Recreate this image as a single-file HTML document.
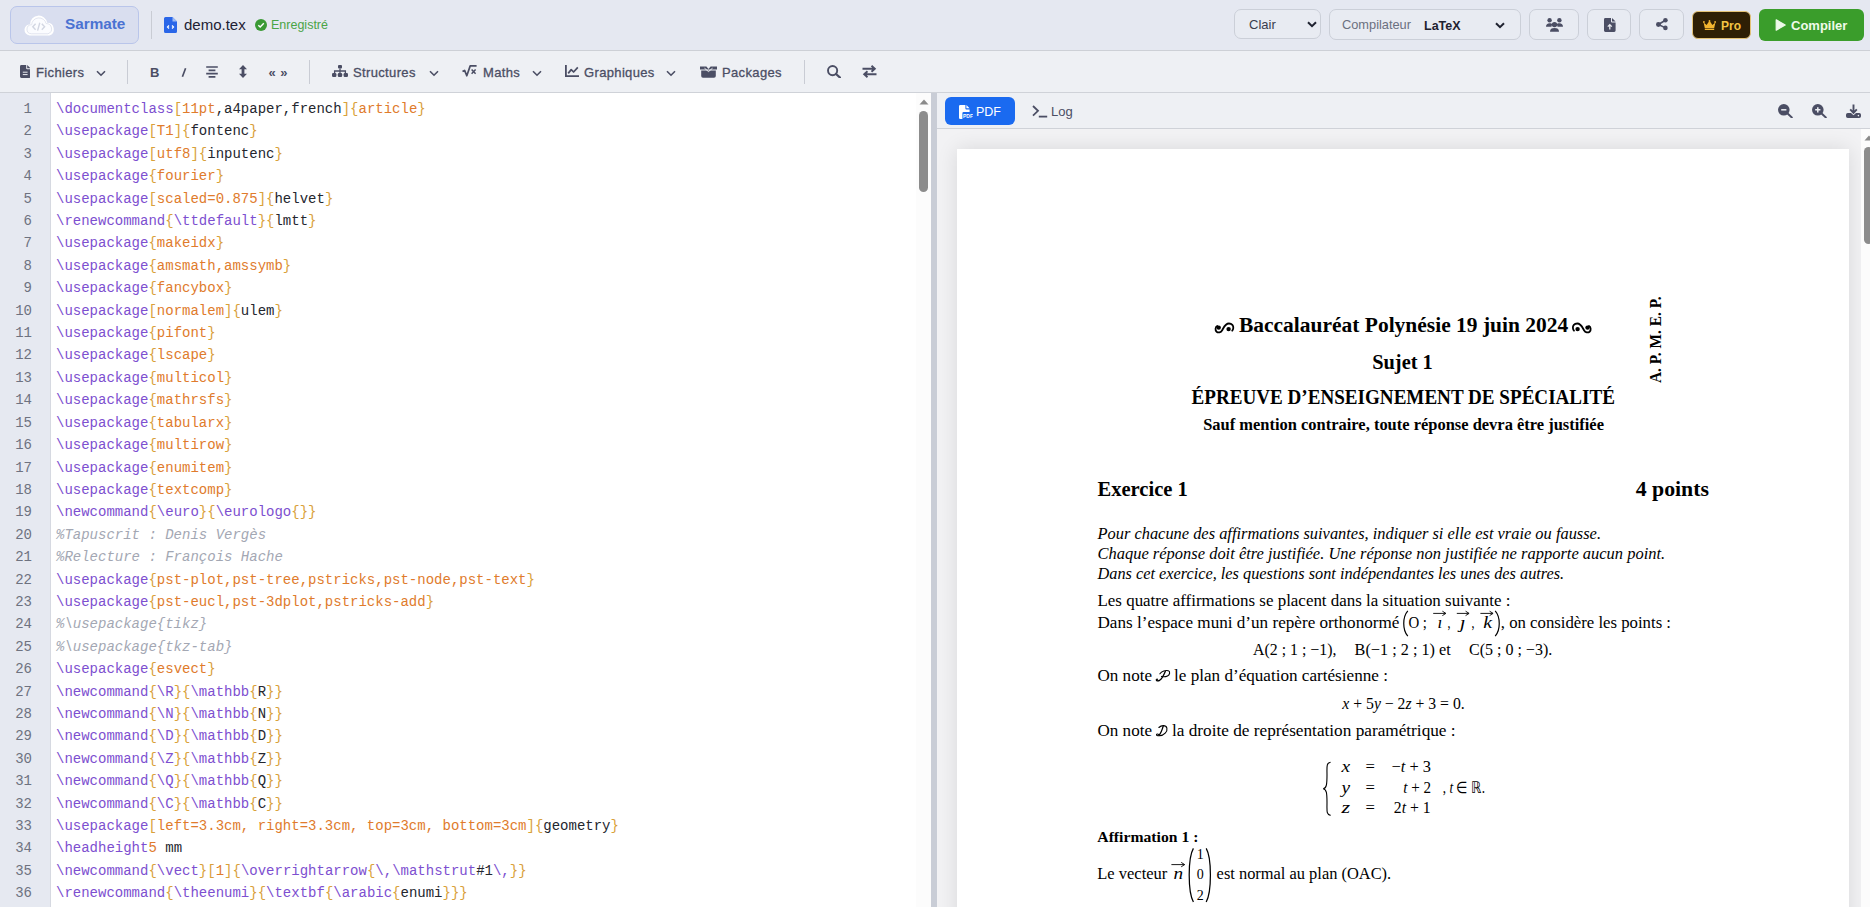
<!DOCTYPE html>
<html><head><meta charset="utf-8">
<style>
*{box-sizing:border-box;margin:0;padding:0}
html,body{width:1870px;height:907px;overflow:hidden;background:#fff;font-family:"Liberation Sans",sans-serif}
.a{position:absolute}
#hdr{left:0;top:0;width:1870px;height:51px;background:#e5e8f1;border-bottom:1px solid #cdd0d6}
#tb{left:0;top:51px;width:1870px;height:42px;background:#eef0f4;border-bottom:1px solid #cfd2d8}
.sep{width:1px;background:#c9ccd4}
.tbt{font-size:13px;color:#4b4e64;top:64px;line-height:18px;letter-spacing:0.35px;-webkit-text-stroke:0.3px #4b4e64}
.hbtn{top:9px;height:30px;border:1px solid #cbcfd8;border-radius:7px;background:#e8ebf2}
svg{display:block}
#gut{left:0;top:98px;width:32px;text-align:right;font-family:"Liberation Mono",monospace;font-size:14px;line-height:22.4px;color:#6e7280}
#code{left:56px;top:98px;font-family:"Liberation Mono",monospace;font-size:14px;line-height:22.4px;color:#24262e;white-space:pre}
#code b{font-weight:normal;color:#7d4fd0}
#code u{text-decoration:none;color:#d9a13a}
#code s{text-decoration:none;color:#e07b2c}
#code i{color:#a3a7b3}
</style></head><body>
<div id="hdr" class="a"></div>
<div id="tb" class="a"></div>

<!-- logo -->
<div class="a" style="left:10px;top:6px;width:129px;height:38px;border:1px solid #b9c5ea;border-radius:7px;background:#d9deef"></div>
<svg class="a" style="left:24px;top:14px" width="32" height="22" viewBox="0 0 32 22">
 <path d="M5.60 21.50 A5.70 5.70 0 0 1 6.14 10.13 A8.60 8.60 0 0 1 23.20 8.68 A6.60 6.60 0 0 1 25.40 21.50 Z" fill="#fff"/>
 <path d="M5.60 21.50 A5.70 5.70 0 0 1 6.14 10.13 A8.60 8.60 0 0 1 23.20 8.68 A6.60 6.60 0 0 1 25.40 21.50 Z" transform="translate(16 13) scale(0.84 0.8) translate(-16 -13)" fill="#fbfcff" stroke="#dcdfeb" stroke-width="1"/>
 <path d="M11.6 9.8 L8.8 12.8 L11.6 15.8 M17.8 9.8 L20.6 12.8 L17.8 15.8 M15.8 8.8 L13.6 16.6" fill="none" stroke="#d2d6e2" stroke-width="1.4"/>
</svg>
<div class="a" style="left:65px;top:15px;font-size:15.3px;font-weight:bold;color:#4a72d2;line-height:18px">Sarmate</div>
<div class="a sep" style="left:151px;top:11px;height:28px"></div>
<svg class="a" style="left:164px;top:17px" width="13" height="16" viewBox="0 0 13 16">
 <path d="M1.5 0 H8.5 L13 4.5 V14.5 A1.5 1.5 0 0 1 11.5 16 H1.5 A1.5 1.5 0 0 1 0 14.5 V1.5 A1.5 1.5 0 0 1 1.5 0 Z" fill="#2a66e8"/>
 <path d="M8.5 0 V4.5 H13" fill="#9fbcf5"/>
 <path d="M5 8.5 L3.5 10 L5 11.5 M8 8.5 L9.5 10 L8 11.5" fill="none" stroke="#fff" stroke-width="1.2"/>
</svg>
<div class="a" style="left:184px;top:16px;font-size:15px;color:#1e2133;line-height:18px">demo.tex</div>
<svg class="a" style="left:255px;top:19px" width="12" height="12" viewBox="0 0 12 12">
 <circle cx="6" cy="6" r="6" fill="#3a9a35"/>
 <path d="M3.3 6.2 L5.2 8 L8.8 4.3" fill="none" stroke="#fff" stroke-width="1.4"/>
</svg>
<div class="a" style="left:271px;top:17px;font-size:12.5px;color:#4aa445;line-height:16px">Enregistré</div>

<!-- header right -->
<div class="a hbtn" style="left:1234px;width:87px"></div>
<div class="a" style="left:1249px;top:17px;font-size:13px;color:#3a3d4e;line-height:16px">Clair</div>
<svg class="a" style="left:1307px;top:21px" width="10" height="7" viewBox="0 0 10 7"><path d="M1 1.2 L5 5.2 L9 1.2" fill="none" stroke="#1f2230" stroke-width="2"/></svg>
<div class="a hbtn" style="left:1329px;width:192px;height:31px"></div>
<div class="a" style="left:1342px;top:17px;font-size:12.8px;color:#6b7080;line-height:16px">Compilateur</div>
<div class="a" style="left:1424px;top:18px;font-size:12.5px;font-weight:bold;color:#1f2230;line-height:16px">LaTeX</div>
<svg class="a" style="left:1495px;top:22px" width="10" height="7" viewBox="0 0 10 7"><path d="M1 1.2 L5 5.2 L9 1.2" fill="none" stroke="#1f2230" stroke-width="2"/></svg>
<div class="a hbtn" style="left:1529px;width:50px;height:31px"></div>
<div class="a hbtn" style="left:1587px;width:44px;height:31px"></div>
<div class="a hbtn" style="left:1639px;width:45px;height:31px"></div>
<div class="a" style="left:1692px;top:11px;width:59px;height:28px;background:#2e1f05;border:1px solid #e3c277;border-radius:6px"></div>
<div class="a" style="left:1721px;top:17.5px;font-size:12px;font-weight:bold;color:#f3c443;line-height:16px">Pro</div>
<div class="a" style="left:1759px;top:9px;width:105px;height:32px;background:#3a9d2b;border-radius:6px"></div>
<div class="a" style="left:1791px;top:18px;font-size:13px;font-weight:bold;color:#effbe9;line-height:16px">Compiler</div>

<!-- toolbar -->
<div class="a tbt" style="left:36px">Fichiers</div>
<div class="a sep" style="left:127px;top:60px;height:24px"></div>
<div class="a sep" style="left:309px;top:60px;height:24px"></div>
<div class="a tbt" style="left:353px">Structures</div>
<div class="a tbt" style="left:483px">Maths</div>
<div class="a tbt" style="left:584px">Graphiques</div>
<div class="a tbt" style="left:722px">Packages</div>
<div class="a sep" style="left:804px;top:60px;height:24px"></div>

<!-- EDITOR -->
<div class="a" style="left:0;top:93px;width:51px;height:814px;background:#e6e9f1;border-right:1px solid #d6d9e1"></div>
<div class="a" style="left:931px;top:93px;width:6px;height:814px;background:#c9cdd6"></div>
<!-- CODE -->
<div class="a" id="gut"><div>1</div><div>2</div><div>3</div><div>4</div><div>5</div><div>6</div><div>7</div><div>8</div><div>9</div><div>10</div><div>11</div><div>12</div><div>13</div><div>14</div><div>15</div><div>16</div><div>17</div><div>18</div><div>19</div><div>20</div><div>21</div><div>22</div><div>23</div><div>24</div><div>25</div><div>26</div><div>27</div><div>28</div><div>29</div><div>30</div><div>31</div><div>32</div><div>33</div><div>34</div><div>35</div><div>36</div></div>
<div class="a" id="code"><div><b>\documentclass</b><u>[</u><s>11pt</s>,a4paper,french<u>]</u><u>{</u><s>article</s><u>}</u></div><div><b>\usepackage</b><u>[</u><s>T1</s><u>]</u><u>{</u>fontenc<u>}</u></div><div><b>\usepackage</b><u>[</u><s>utf8</s><u>]</u><u>{</u>inputenc<u>}</u></div><div><b>\usepackage</b><u>{</u><s>fourier</s><u>}</u></div><div><b>\usepackage</b><u>[</u><s>scaled=0.875</s><u>]</u><u>{</u>helvet<u>}</u></div><div><b>\renewcommand</b><u>{</u><b>\ttdefault</b><u>}</u><u>{</u>lmtt<u>}</u></div><div><b>\usepackage</b><u>{</u><s>makeidx</s><u>}</u></div><div><b>\usepackage</b><u>{</u><s>amsmath,amssymb</s><u>}</u></div><div><b>\usepackage</b><u>{</u><s>fancybox</s><u>}</u></div><div><b>\usepackage</b><u>[</u><s>normalem</s><u>]</u><u>{</u>ulem<u>}</u></div><div><b>\usepackage</b><u>{</u><s>pifont</s><u>}</u></div><div><b>\usepackage</b><u>{</u><s>lscape</s><u>}</u></div><div><b>\usepackage</b><u>{</u><s>multicol</s><u>}</u></div><div><b>\usepackage</b><u>{</u><s>mathrsfs</s><u>}</u></div><div><b>\usepackage</b><u>{</u><s>tabularx</s><u>}</u></div><div><b>\usepackage</b><u>{</u><s>multirow</s><u>}</u></div><div><b>\usepackage</b><u>{</u><s>enumitem</s><u>}</u></div><div><b>\usepackage</b><u>{</u><s>textcomp</s><u>}</u></div><div><b>\newcommand</b><u>{</u><b>\euro</b><u>}</u><u>{</u><b>\eurologo</b><u>{</u><u>}</u><u>}</u></div><div><i>%Tapuscrit : Denis Vergès</i></div><div><i>%Relecture : François Hache</i></div><div><b>\usepackage</b><u>{</u><s>pst-plot,pst-tree,pstricks,pst-node,pst-text</s><u>}</u></div><div><b>\usepackage</b><u>{</u><s>pst-eucl,pst-3dplot,pstricks-add</s><u>}</u></div><div><i>%\usepackage{tikz}</i></div><div><i>%\usepackage{tkz-tab}</i></div><div><b>\usepackage</b><u>{</u><s>esvect</s><u>}</u></div><div><b>\newcommand</b><u>{</u><b>\R</b><u>}</u><u>{</u><b>\mathbb</b><u>{</u>R<u>}</u><u>}</u></div><div><b>\newcommand</b><u>{</u><b>\N</b><u>}</u><u>{</u><b>\mathbb</b><u>{</u>N<u>}</u><u>}</u></div><div><b>\newcommand</b><u>{</u><b>\D</b><u>}</u><u>{</u><b>\mathbb</b><u>{</u>D<u>}</u><u>}</u></div><div><b>\newcommand</b><u>{</u><b>\Z</b><u>}</u><u>{</u><b>\mathbb</b><u>{</u>Z<u>}</u><u>}</u></div><div><b>\newcommand</b><u>{</u><b>\Q</b><u>}</u><u>{</u><b>\mathbb</b><u>{</u>Q<u>}</u><u>}</u></div><div><b>\newcommand</b><u>{</u><b>\C</b><u>}</u><u>{</u><b>\mathbb</b><u>{</u>C<u>}</u><u>}</u></div><div><b>\usepackage</b><u>[</u><s>left=3.3cm, right=3.3cm, top=3cm, bottom=3cm</s><u>]</u><u>{</u>geometry<u>}</u></div><div><b>\headheight</b><s>5</s> mm</div><div><b>\newcommand</b><u>{</u><b>\vect</b><u>}</u><u>[</u><s>1</s><u>]</u><u>{</u><b>\overrightarrow</b><u>{</u><b>\,</b><b>\mathstrut</b>#1<b>\,</b><u>}</u><u>}</u></div><div><b>\renewcommand</b><u>{</u><b>\theenumi</b><u>}</u><u>{</u><b>\textbf</b><u>{</u><b>\arabic</b><u>{</u>enumi<u>}</u><u>}</u><u>}</u></div></div>
<!-- /CODE -->

<!-- PDF panel -->
<div class="a" style="left:937px;top:93px;width:933px;height:36px;background:#eef0f4;border-bottom:1px solid #cfd2d8"></div>
<div class="a" style="left:937px;top:129px;width:933px;height:778px;background:#f2f2f4"></div>
<div class="a" style="left:957px;top:149px;width:892px;height:800px;background:#fff;box-shadow:0 0 20px rgba(0,0,0,.11)"></div>
<!-- PDF -->
<svg class="a" style="left:957px;top:149px" width="892" height="758" viewBox="957 149 892 758" font-family="Liberation Serif" fill="#000"><g transform="translate(1214.6 322.6)"><path d="M2.6 3.4 C0.6 4.4 0.4 7.8 2 9.1 C3.6 10.4 6.2 10 7.6 7.6 C9 5.2 10.6 0.9 14.4 0.9 C17.4 0.9 18.9 3.2 18.7 5.4 C18.5 7 17.8 7.9 17.6 8.1" fill="none" stroke="#000" stroke-width="1.8" stroke-linecap="round"/><circle cx="4.1" cy="5" r="2.2"/><circle cx="14" cy="6.5" r="2.2"/></g>
<g transform="translate(1591.6 322.6) scale(-1 1)"><path d="M2.6 3.4 C0.6 4.4 0.4 7.8 2 9.1 C3.6 10.4 6.2 10 7.6 7.6 C9 5.2 10.6 0.9 14.4 0.9 C17.4 0.9 18.9 3.2 18.7 5.4 C18.5 7 17.8 7.9 17.6 8.1" fill="none" stroke="#000" stroke-width="1.8" stroke-linecap="round"/><circle cx="4.1" cy="5" r="2.2"/><circle cx="14" cy="6.5" r="2.2"/></g>
<text x="1239.0" y="331.8" font-size="21.6" font-weight="bold" font-style="normal" textLength="329.2" lengthAdjust="spacingAndGlyphs">Baccalauréat Polynésie 19 juin 2024</text>
<text x="1372.2" y="369.4" font-size="20.2" font-weight="bold" font-style="normal" textLength="60.6" lengthAdjust="spacingAndGlyphs">Sujet 1</text>
<text x="1191.6" y="403.5" font-size="20.2" font-weight="bold" font-style="normal" textLength="423.4" lengthAdjust="spacingAndGlyphs">ÉPREUVE D’ENSEIGNEMENT DE SPÉCIALITÉ</text>
<text x="1203.2" y="430.2" font-size="16.9" font-weight="bold" font-style="normal" textLength="400.8" lengthAdjust="spacingAndGlyphs">Sauf mention contraire, toute réponse devra être justifiée</text>
<text transform="translate(1661 383) rotate(-90)" font-size="16.5" font-weight="bold" textLength="86.5" lengthAdjust="spacingAndGlyphs">A. P. M. E. P.</text>
<text x="1097.5" y="495.9" font-size="20.4" font-weight="bold" font-style="normal" textLength="90.3" lengthAdjust="spacingAndGlyphs">Exercice 1</text>
<text x="1635.7" y="495.7" font-size="20.4" font-weight="bold" font-style="normal" textLength="73.3" lengthAdjust="spacingAndGlyphs">4 points</text>
<text x="1097.5" y="539.0" font-size="16.8" font-weight="normal" font-style="italic" textLength="503.5" lengthAdjust="spacingAndGlyphs">Pour chacune des affirmations suivantes, indiquer si elle est vraie ou fausse.</text>
<text x="1097.5" y="559.0" font-size="16.8" font-weight="normal" font-style="italic" textLength="567.7" lengthAdjust="spacingAndGlyphs">Chaque réponse doit être justifiée. Une réponse non justifiée ne rapporte aucun point.</text>
<text x="1097.5" y="578.7" font-size="16.8" font-weight="normal" font-style="italic" textLength="466.7" lengthAdjust="spacingAndGlyphs">Dans cet exercice, les questions sont indépendantes les unes des autres.</text>
<text x="1097.5" y="605.8" font-size="16.2" font-weight="normal" font-style="normal" textLength="412.9" lengthAdjust="spacingAndGlyphs">Les quatre affirmations se placent dans la situation suivante :</text>
<text x="1097.5" y="628.0" font-size="16.2" font-weight="normal" font-style="normal" textLength="301.9" lengthAdjust="spacingAndGlyphs">Dans l’espace muni d’un repère orthonormé</text>
<path d="M1407.8 610.8 C1402.4 617 1402.4 630 1407.8 636.2" fill="none" stroke="#000" stroke-width="1.2"/>
<path d="M1495.2 610.8 C1500.6 617 1500.6 630 1495.2 636.2" fill="none" stroke="#000" stroke-width="1.2"/>
<text x="1408.4" y="628.0" font-size="16.2" font-weight="normal" font-style="normal" textLength="18.6" lengthAdjust="spacingAndGlyphs">O ;</text>
<path d="M1433.2 613.4 H1445.6" stroke="#000" stroke-width="0.9"/><path d="M1442.3999999999999 611.1999999999999 L1445.8999999999999 613.4 L1442.3999999999999 615.6" fill="none" stroke="#000" stroke-width="0.9"/>
<text x="1437.6" y="628.0" font-size="16.2" font-weight="normal" font-style="italic" textLength="4.8" lengthAdjust="spacingAndGlyphs">ı</text>
<text x="1447.4" y="628.0" font-size="16.2" font-weight="normal" font-style="normal" textLength="3.0" lengthAdjust="spacingAndGlyphs">,</text>
<path d="M1456.8 613.4 H1468.8" stroke="#000" stroke-width="0.9"/><path d="M1465.6 611.1999999999999 L1469.1 613.4 L1465.6 615.6" fill="none" stroke="#000" stroke-width="0.9"/>
<text x="1459.8" y="628.0" font-size="16.2" font-weight="normal" font-style="italic" textLength="5.8" lengthAdjust="spacingAndGlyphs">ȷ</text>
<text x="1471.6" y="628.0" font-size="16.2" font-weight="normal" font-style="normal" textLength="3.0" lengthAdjust="spacingAndGlyphs">,</text>
<path d="M1480.4 613.4 H1492.8" stroke="#000" stroke-width="0.9"/><path d="M1489.6 611.1999999999999 L1493.1 613.4 L1489.6 615.6" fill="none" stroke="#000" stroke-width="0.9"/>
<text x="1483.2" y="628.0" font-size="16.2" font-weight="normal" font-style="italic" textLength="8.8" lengthAdjust="spacingAndGlyphs">k</text>
<text x="1500.8" y="628.0" font-size="16.2" font-weight="normal" font-style="normal" textLength="170.2" lengthAdjust="spacingAndGlyphs">, on considère les points :</text>
<text x="1253.0" y="655.0" font-size="16.2" font-weight="normal" font-style="normal" textLength="83.4" lengthAdjust="spacingAndGlyphs">A(2 ; 1 ; −1),</text>
<text x="1354.6" y="655.0" font-size="16.2" font-weight="normal" font-style="normal" textLength="96.2" lengthAdjust="spacingAndGlyphs">B(−1 ; 2 ; 1) et</text>
<text x="1469.0" y="655.0" font-size="16.2" font-weight="normal" font-style="normal" textLength="83.2" lengthAdjust="spacingAndGlyphs">C(5 ; 0 ; −3).</text>
<text x="1097.5" y="680.7" font-size="16.2" font-weight="normal" font-style="normal" textLength="54.5" lengthAdjust="spacingAndGlyphs">On note</text>
<g transform="translate(1155.7 670.2)" fill="none" stroke="#000" stroke-width="1.1" stroke-linecap="round"><path d="M4.2 3.6 C6 0.9 10 -0.1 12.6 0.6 C14.6 1.2 14.4 4.6 11.8 5.8 C9.6 6.8 7 6.6 5.8 6.2"/><path d="M9.6 1.2 C8.2 4.5 6.2 8.4 4.2 9.9 C3 10.7 1.4 10.7 0.7 10 C0.3 9.4 1 8.7 1.8 9.1" stroke-width="1.3"/></g>
<text x="1174.0" y="680.7" font-size="16.2" font-weight="normal" font-style="normal" textLength="213.9" lengthAdjust="spacingAndGlyphs">le plan d’équation cartésienne :</text>
<text x="1342.3" y="708.8" font-size="16.2" textLength="122.4" lengthAdjust="spacingAndGlyphs"><tspan font-style="italic">x</tspan> + 5<tspan font-style="italic">y</tspan> − 2<tspan font-style="italic">z</tspan> + 3 = 0.</text>
<text x="1097.5" y="735.8" font-size="16.2" font-weight="normal" font-style="normal" textLength="54.5" lengthAdjust="spacingAndGlyphs">On note</text>
<g transform="translate(1155.7 724.9)" fill="none" stroke="#000" stroke-width="1.1" stroke-linecap="round"><path d="M3.2 2.6 C5.4 0.4 10.2 -0.3 11.2 3.2 C12 6.5 8.4 10.7 3.6 10.9 C1.8 11 0.6 10.6 0.8 9.7 C1 8.9 2.4 9 3.2 9.7"/><path d="M7.6 1 C6.6 4.5 5.4 8 3.4 10.3" stroke-width="1.3"/></g>
<text x="1172.0" y="735.8" font-size="16.2" font-weight="normal" font-style="normal" textLength="283.6" lengthAdjust="spacingAndGlyphs">la droite de représentation paramétrique :</text>
<path d="M1330.6 762.2 C1326.2 762.6 1327 767 1327 775 C1327 784 1326.6 788.4 1323.2 788.8 C1326.6 789.2 1327 793.6 1327 802.6 C1327 810.6 1326.2 815 1330.6 815.4" fill="none" stroke="#000" stroke-width="1.1"/>
<text x="1341.6" y="771.8" font-size="16.2" font-weight="normal" font-style="italic" textLength="8.6" lengthAdjust="spacingAndGlyphs">x</text>
<text x="1365.6" y="771.8" font-size="16.2" font-weight="normal" font-style="normal" textLength="9.4" lengthAdjust="spacingAndGlyphs">=</text>
<text x="1391.6" y="771.8" font-size="16.2" textLength="39.4" lengthAdjust="spacingAndGlyphs">−<tspan font-style="italic">t</tspan> + 3</text>
<text x="1341.6" y="792.6" font-size="16.2" font-weight="normal" font-style="italic" textLength="8.6" lengthAdjust="spacingAndGlyphs">y</text>
<text x="1365.6" y="792.6" font-size="16.2" font-weight="normal" font-style="normal" textLength="9.4" lengthAdjust="spacingAndGlyphs">=</text>
<text x="1403.2" y="792.6" font-size="16.2" textLength="27.8" lengthAdjust="spacingAndGlyphs"><tspan font-style="italic">t</tspan> + 2</text>
<text x="1442.8" y="792.6" font-size="16.2" textLength="42.2" lengthAdjust="spacingAndGlyphs">, <tspan font-style="italic">t</tspan> ∈ ℝ.</text>
<text x="1341.6" y="812.6" font-size="16.2" font-weight="normal" font-style="italic" textLength="8.6" lengthAdjust="spacingAndGlyphs">z</text>
<text x="1365.6" y="812.6" font-size="16.2" font-weight="normal" font-style="normal" textLength="9.4" lengthAdjust="spacingAndGlyphs">=</text>
<text x="1393.8" y="812.6" font-size="16.2" textLength="36.8" lengthAdjust="spacingAndGlyphs">2<tspan font-style="italic">t</tspan> + 1</text>
<text x="1097.3" y="842.4" font-size="15.6" font-weight="bold" font-style="normal" textLength="101.1" lengthAdjust="spacingAndGlyphs">Affirmation 1 :</text>
<text x="1097.3" y="878.9" font-size="16.2" font-weight="normal" font-style="normal" textLength="70.0" lengthAdjust="spacingAndGlyphs">Le vecteur</text>
<path d="M1171.4 864.6 H1184.4" stroke="#000" stroke-width="0.9"/><path d="M1181.2 862.4 L1184.7 864.6 L1181.2 866.8000000000001" fill="none" stroke="#000" stroke-width="0.9"/>
<text x="1173.4" y="878.9" font-size="16.2" font-weight="normal" font-style="italic" textLength="9.6" lengthAdjust="spacingAndGlyphs">n</text>
<path d="M1193.4 848.4 C1187.8 858 1187.8 892 1193.4 902" fill="none" stroke="#000" stroke-width="1.25"/>
<path d="M1206.2 848.4 C1211.8 858 1211.8 892 1206.2 902" fill="none" stroke="#000" stroke-width="1.25"/>
<text x="1196.8" y="859.0" font-size="13.6" font-weight="normal" font-style="normal" textLength="7.0" lengthAdjust="spacingAndGlyphs">1</text>
<text x="1196.8" y="878.9" font-size="13.6" font-weight="normal" font-style="normal" textLength="7.0" lengthAdjust="spacingAndGlyphs">0</text>
<text x="1196.8" y="899.6" font-size="13.6" font-weight="normal" font-style="normal" textLength="7.0" lengthAdjust="spacingAndGlyphs">2</text>
<text x="1216.6" y="878.9" font-size="16.2" font-weight="normal" font-style="normal" textLength="174.6" lengthAdjust="spacingAndGlyphs">est normal au plan (OAC).</text></svg>
<!-- /PDF -->
<div class="a" style="left:945px;top:97px;width:70px;height:28px;background:#1a6af0;border-radius:6px"></div>
<div class="a" style="left:976px;top:104px;font-size:12.5px;color:#fff;line-height:16px">PDF</div>
<div class="a" style="left:1051px;top:104px;font-size:13px;color:#4b4e64;line-height:16px">Log</div>


<!-- ICONS -->
<!-- toolbar -->
<svg class="a" style="left:19.8px;top:65px" width="10.4" height="13" viewBox="0 0 10.4 13"><path d="M1.4 0 H6.2 V3.2 A1 1 0 0 0 7.2 4.2 H10.4 V11.6 A1.4 1.4 0 0 1 9 13 H1.4 A1.4 1.4 0 0 1 0 11.6 V1.4 A1.4 1.4 0 0 1 1.4 0 Z M7.2 0 L10.4 3.2 H7.2 Z" fill="#4b4e64"/><path d="M2.8 7.2 H7.6 M2.8 9.6 H7.6" stroke="#eef0f4" stroke-width="1"/></svg>
<svg class="a" style="left:95.5px;top:69.5px" width="10" height="7" viewBox="0 0 10 7"><path d="M1 1.2 L5 5.2 L9 1.2" fill="none" stroke="#4b4e64" stroke-width="1.6"/></svg>
<div class="a" style="left:150px;top:65px;font-size:13px;font-weight:bold;color:#4b4e64;line-height:16px">B</div>
<svg class="a" style="left:180.5px;top:68px" width="6" height="9" viewBox="0 0 6 9"><path d="M4.6 0.3 L1.4 8.7" stroke="#4b4e64" stroke-width="1.7"/></svg>
<svg class="a" style="left:205.5px;top:65.5px" width="12" height="12" viewBox="0 0 12 12"><path d="M0.2 1 H11.8 M2.6 4.3 H9.4 M0.2 7.6 H11.8 M2.6 10.9 H9.4" stroke="#4b4e64" stroke-width="1.7"/></svg>
<svg class="a" style="left:238.5px;top:65px" width="8" height="13" viewBox="0 0 8 13"><path d="M4 0 L8 4.2 H5.4 V8.8 H8 L4 13 L0 8.8 H2.6 V4.2 H0 Z" fill="#4b4e64"/></svg>
<div class="a" style="left:268.5px;top:64.5px;font-size:13px;font-weight:bold;color:#4b4e64;line-height:16px;letter-spacing:0.5px">« »</div>
<svg class="a" style="left:331.5px;top:65px" width="16" height="12" viewBox="0 0 16 12"><rect x="6" y="0" width="4" height="3.6" rx="1" fill="#4b4e64"/><path d="M8 3.4 V6 M2.6 8 V6 H13.4 V8 M8 6 V8" fill="none" stroke="#4b4e64" stroke-width="1.3"/><rect x="0" y="8" width="4.4" height="4" rx="1.2" fill="#4b4e64"/><rect x="5.8" y="8" width="4.4" height="4" rx="1.2" fill="#4b4e64"/><rect x="11.6" y="8" width="4.4" height="4" rx="1.2" fill="#4b4e64"/></svg>
<svg class="a" style="left:428.5px;top:69.5px" width="10" height="7" viewBox="0 0 10 7"><path d="M1 1.2 L5 5.2 L9 1.2" fill="none" stroke="#4b4e64" stroke-width="1.6"/></svg>
<svg class="a" style="left:461.5px;top:65px" width="15" height="12" viewBox="0 0 15 12"><path d="M0.5 6.6 L2.6 5.4 L4.8 10.8 L8.2 0.9 H14.6" fill="none" stroke="#4b4e64" stroke-width="1.7" stroke-linejoin="round"/><path d="M9.6 4.6 L13.6 8.8 M13.6 4.6 L9.6 8.8" stroke="#4b4e64" stroke-width="1.5"/></svg>
<svg class="a" style="left:531.5px;top:69.5px" width="10" height="7" viewBox="0 0 10 7"><path d="M1 1.2 L5 5.2 L9 1.2" fill="none" stroke="#4b4e64" stroke-width="1.6"/></svg>
<svg class="a" style="left:564.5px;top:65px" width="14" height="12" viewBox="0 0 14 12"><path d="M0.9 0 V11.1 H14" fill="none" stroke="#4b4e64" stroke-width="1.8"/><path d="M3.2 8.4 L6.2 4.6 L8.6 7 L12.8 2.4" fill="none" stroke="#4b4e64" stroke-width="1.7" stroke-linejoin="round"/></svg>
<svg class="a" style="left:666px;top:69.5px" width="10" height="7" viewBox="0 0 10 7"><path d="M1 1.2 L5 5.2 L9 1.2" fill="none" stroke="#4b4e64" stroke-width="1.6"/></svg>
<svg class="a" style="left:699.5px;top:65.5px" width="17" height="12" viewBox="0 0 17 12"><path d="M0 0.6 H6.4 L8.5 3 L10.6 0.6 H17 V3.6 H0 Z" fill="#4b4e64"/><path d="M1.2 4.6 H15.8 V10 A1.8 1.8 0 0 1 14 11.8 H3 A1.8 1.8 0 0 1 1.2 10 Z" fill="#4b4e64"/><path d="M4.5 2.2 L8.5 5.6 L12.5 2.2" fill="none" stroke="#eef0f4" stroke-width="1"/></svg>
<svg class="a" style="left:826.5px;top:65px" width="14" height="13" viewBox="0 0 14 13"><circle cx="5.6" cy="5.6" r="4.6" fill="none" stroke="#4b4e64" stroke-width="1.9"/><path d="M9 9 L13 12.6" stroke="#4b4e64" stroke-width="2.2" stroke-linecap="round"/></svg>
<svg class="a" style="left:861.5px;top:64.5px" width="15" height="13" viewBox="0 0 15 13"><path d="M0.5 3.8 H12.5 M9.5 0.8 L12.8 3.8 L9.5 6.8 M14.5 9.2 H2.5 M5.5 6.2 L2.2 9.2 L5.5 12.2" fill="none" stroke="#4b4e64" stroke-width="1.9"/></svg>
<!-- header -->
<svg class="a" style="left:1546px;top:17.5px" width="17" height="14" viewBox="0 0 17 14"><circle cx="3.6" cy="2.3" r="2.2" fill="#4b4e64"/><circle cx="13.4" cy="2.3" r="2.2" fill="#4b4e64"/><path d="M0 8.8 C0 6.4 1.4 5.2 3.6 5.2 C5 5.2 6 5.7 6.4 6.6 C5.8 7.2 5.5 8 5.5 8.8 Z M17 8.8 C17 6.4 15.6 5.2 13.4 5.2 C12 5.2 11 5.7 10.6 6.6 C11.2 7.2 11.5 8 11.5 8.8 Z" fill="#4b4e64"/><circle cx="8.5" cy="6.6" r="2.7" fill="#4b4e64"/><path d="M4 13.8 C4 11 5.6 10 8.5 10 C11.4 10 13 11 13 13.8 Z" fill="#4b4e64"/></svg>
<svg class="a" style="left:1603.5px;top:17.5px" width="12" height="14" viewBox="0 0 12 14"><path d="M1.4 0 H7 V3.6 A1 1 0 0 0 8 4.6 H11.6 V12.6 A1.4 1.4 0 0 1 10.2 14 H1.4 A1.4 1.4 0 0 1 0 12.6 V1.4 A1.4 1.4 0 0 1 1.4 0 Z M8 0 L11.6 3.6 H8 Z" fill="#4b4e64"/><path d="M5.8 11.6 V6.8 M3.8 8.6 L5.8 6.6 L7.8 8.6" fill="none" stroke="#e8eaf0" stroke-width="1.3"/></svg>
<svg class="a" style="left:1656px;top:17.5px" width="12" height="13" viewBox="0 0 12 13"><circle cx="9.4" cy="2.3" r="2.3" fill="#4b4e64"/><circle cx="2.4" cy="6.5" r="2.4" fill="#4b4e64"/><circle cx="9.4" cy="9.9" r="2.3" fill="#4b4e64"/><path d="M9.4 2.3 L2.4 6.5 L9.4 9.9" fill="none" stroke="#4b4e64" stroke-width="1.6"/></svg>
<svg class="a" style="left:1703px;top:19.5px" width="13" height="10" viewBox="0 0 13 10"><path d="M0.6 2.4 L3.6 5 L6.5 0.8 L9.4 5 L12.4 2.4 L11.2 8 H1.8 Z" fill="#f2b530"/><rect x="1.8" y="8.6" width="9.4" height="1.4" fill="#f2b530"/><circle cx="0.9" cy="2" r="0.9" fill="#f2b530"/><circle cx="12.1" cy="2" r="0.9" fill="#f2b530"/><circle cx="6.5" cy="0.9" r="0.9" fill="#f2b530"/></svg>
<svg class="a" style="left:1774.5px;top:18.5px" width="11" height="12" viewBox="0 0 11 12"><path d="M1.2 0.8 L10.2 6 L1.2 11.2 Z" fill="#eefaea" stroke="#eefaea" stroke-width="1.2" stroke-linejoin="round"/></svg>
<!-- pdf toolbar -->
<svg class="a" style="left:958.5px;top:104.5px" width="14" height="14" viewBox="0 0 14 14"><path d="M1.3 0 H6.4 V3.4 A1 1 0 0 0 7.4 4.4 H10.6 V7 H4.6 A1.2 1.2 0 0 0 3.4 8.2 V14 H1.3 A1.3 1.3 0 0 1 0 12.7 V1.3 A1.3 1.3 0 0 1 1.3 0 Z M7.4 0 L10.6 3.2 H7.4 Z" fill="#fff"/><text x="4" y="13.2" font-size="6" font-weight="bold" fill="#fff" font-family="Liberation Sans" textLength="10" lengthAdjust="spacingAndGlyphs">PDF</text></svg>
<svg class="a" style="left:1032px;top:105px" width="16" height="13" viewBox="0 0 16 13"><path d="M1 1 L6 5.8 L1 10.6" fill="none" stroke="#4b4e64" stroke-width="1.8"/><path d="M6.8 11.6 H15.2" stroke="#4b4e64" stroke-width="1.8"/></svg>
<svg class="a" style="left:1777.5px;top:104px" width="15" height="14" viewBox="0 0 15 14"><circle cx="5.8" cy="5.8" r="5.8" fill="#4b4e64"/><path d="M3.2 5.8 H8.4" stroke="#eef0f4" stroke-width="1.5"/><path d="M9.6 9.6 L13.8 13.4" stroke="#4b4e64" stroke-width="2" stroke-linecap="round"/></svg>
<svg class="a" style="left:1811.5px;top:104px" width="15" height="14" viewBox="0 0 15 14"><circle cx="5.8" cy="5.8" r="5.8" fill="#4b4e64"/><path d="M3.2 5.8 H8.4 M5.8 3.2 V8.4" stroke="#eef0f4" stroke-width="1.5"/><path d="M9.6 9.6 L13.8 13.4" stroke="#4b4e64" stroke-width="2" stroke-linecap="round"/></svg>
<svg class="a" style="left:1845.5px;top:104px" width="15" height="14" viewBox="0 0 15 14"><path d="M7.5 0.5 V8.6 M4.2 5.4 L7.5 8.8 L10.8 5.4" fill="none" stroke="#4b4e64" stroke-width="1.9"/><path d="M1.8 9 H5 L7.5 11.2 L10 9 H13.2 A1.8 1.8 0 0 1 15 10.8 V12.2 A1.8 1.8 0 0 1 13.2 14 H1.8 A1.8 1.8 0 0 1 0 12.2 V10.8 A1.8 1.8 0 0 1 1.8 9 Z" fill="#4b4e64"/><circle cx="12.4" cy="11.6" r="0.8" fill="#eef0f4"/></svg>
<!-- scrollbars -->
<div class="a" style="left:916px;top:93px;width:15px;height:814px;background:#fcfcfc"></div>
<svg class="a" style="left:918.5px;top:98.5px" width="10" height="6" viewBox="0 0 10 6"><path d="M5 0.5 L9.5 5.5 H0.5 Z" fill="#8a8a8a"/></svg>
<div class="a" style="left:919px;top:111px;width:9px;height:81px;background:#8c8c8c;border-radius:4.5px"></div>

<div class="a" style="left:1861px;top:129px;width:9px;height:778px;background:#fcfcfc"></div>
<svg class="a" style="left:1863.5px;top:134.5px" width="10" height="6" viewBox="0 0 10 6"><path d="M5 0.5 L9.5 5.5 H0.5 Z" fill="#8a8a8a"/></svg>
<div class="a" style="left:1864px;top:147px;width:9px;height:97px;background:#8c8c8c;border-radius:4.5px"></div>
<!-- /ICONS -->
</body></html>
